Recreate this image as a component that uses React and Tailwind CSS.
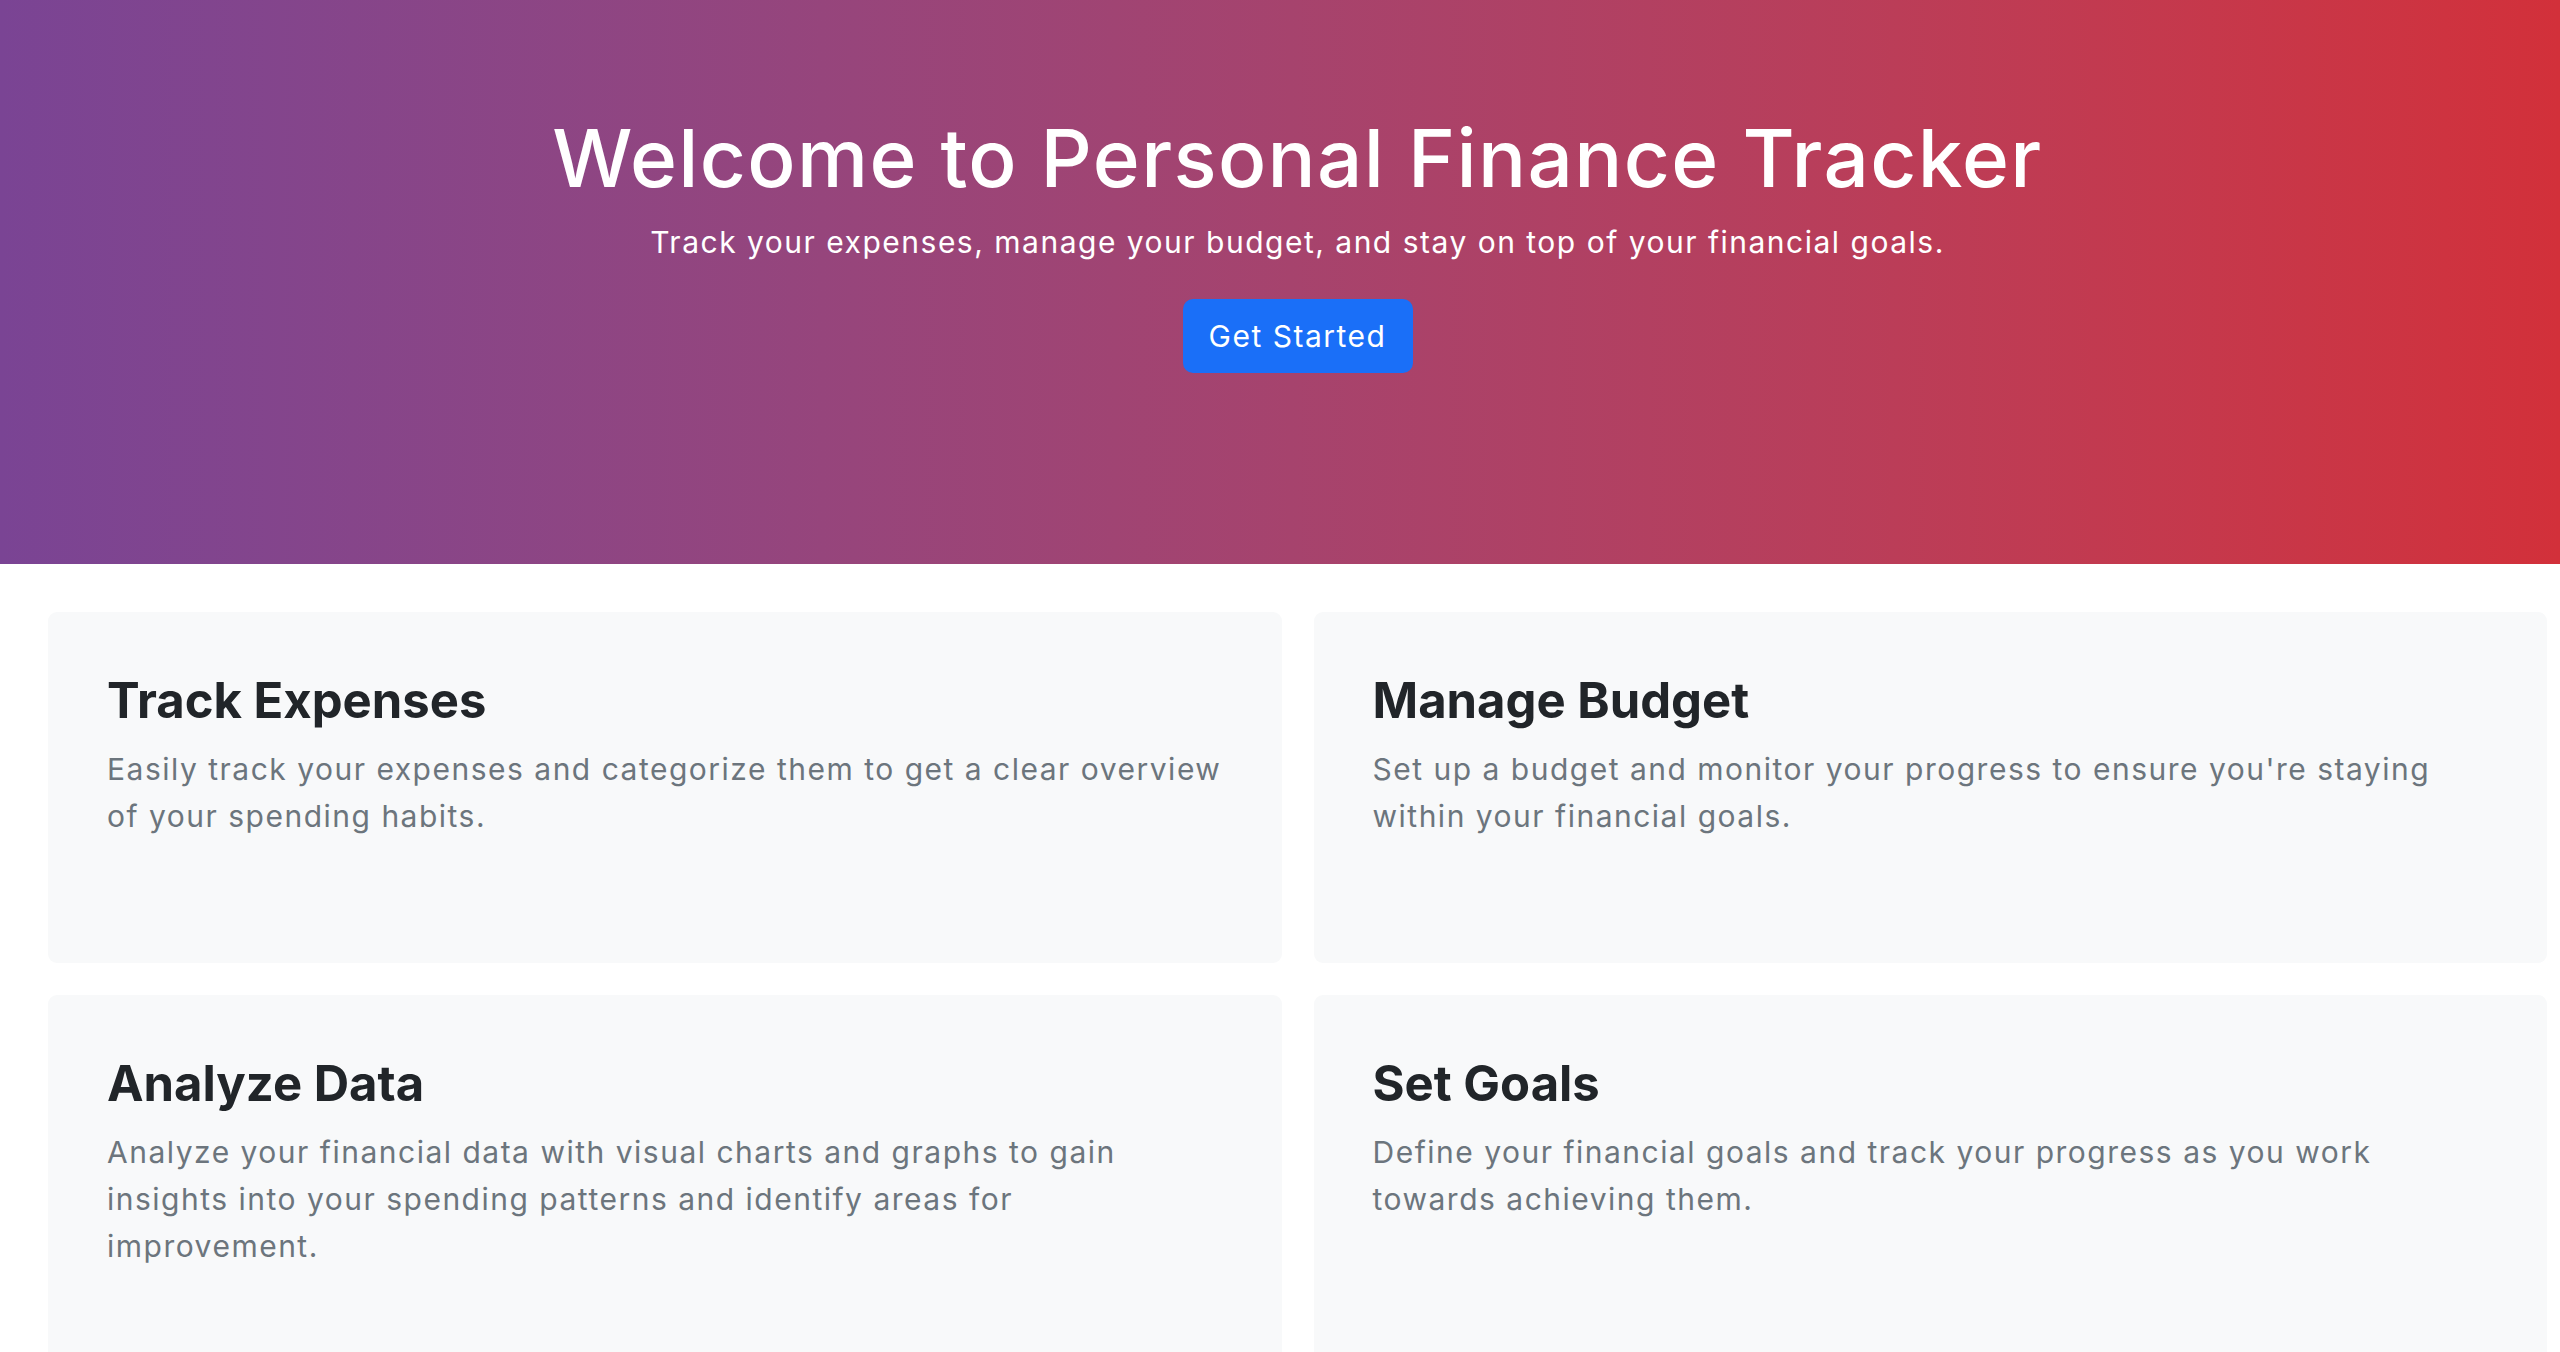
const features = [
  {
    title: 'Track Expenses',
    text: 'Easily track your expenses and categorize them to get a clear overview of your spending habits.',
  },
  {
    title: 'Manage Budget',
    text: "Set up a budget and monitor your progress to ensure you're staying within your financial goals.",
  },
  {
    title: 'Analyze Data',
    text: 'Analyze your financial data with visual charts and graphs to gain insights into your spending patterns and identify areas for improvement.',
  },
  {
    title: 'Set Goals',
    text: 'Define your financial goals and track your progress as you work towards achieving them.',
  },
];

export default function App() {
  return (
    <div className="min-h-screen bg-white font-['Inter','Noto_Sans',sans-serif]">
      {/* Hero */}
      <header className="h-[564px] bg-gradient-to-r from-[#7a4494] to-[#d2303a] pt-[110px] pl-[35px] text-center text-white">
        <h1 className="text-[80px] leading-[96px] font-medium tracking-[0.017em]">
          Welcome to Personal Finance Tracker
        </h1>
        <p className="mt-[14px] text-[30px] leading-[45px] tracking-[0.05em]">
          Track your expenses, manage your budget, and stay on top of your financial goals.
        </p>
        <button className="mt-[34px] h-[74px] w-[230px] rounded-[10px] bg-[#1a6ff8] text-[30px] tracking-[0.05em] text-white">
          Get Started
        </button>
      </header>

      {/* Features */}
      <main className="grid grid-cols-2 gap-[32px] pt-[48px] pr-[13px] pl-[48px]">
        {features.map((f) => (
          <div key={f.title} className="rounded-[9px] bg-[#f8f9fa] p-[59px]">
            <h3 className="mb-[16px] text-[49px] leading-[59px] font-bold text-[#212529]">{f.title}</h3>
            <p className="mb-[64px] text-[30px] leading-[47px] tracking-[0.05em] text-[#6c757d]">{f.text}</p>
          </div>
        ))}
      </main>
    </div>
  );
}
